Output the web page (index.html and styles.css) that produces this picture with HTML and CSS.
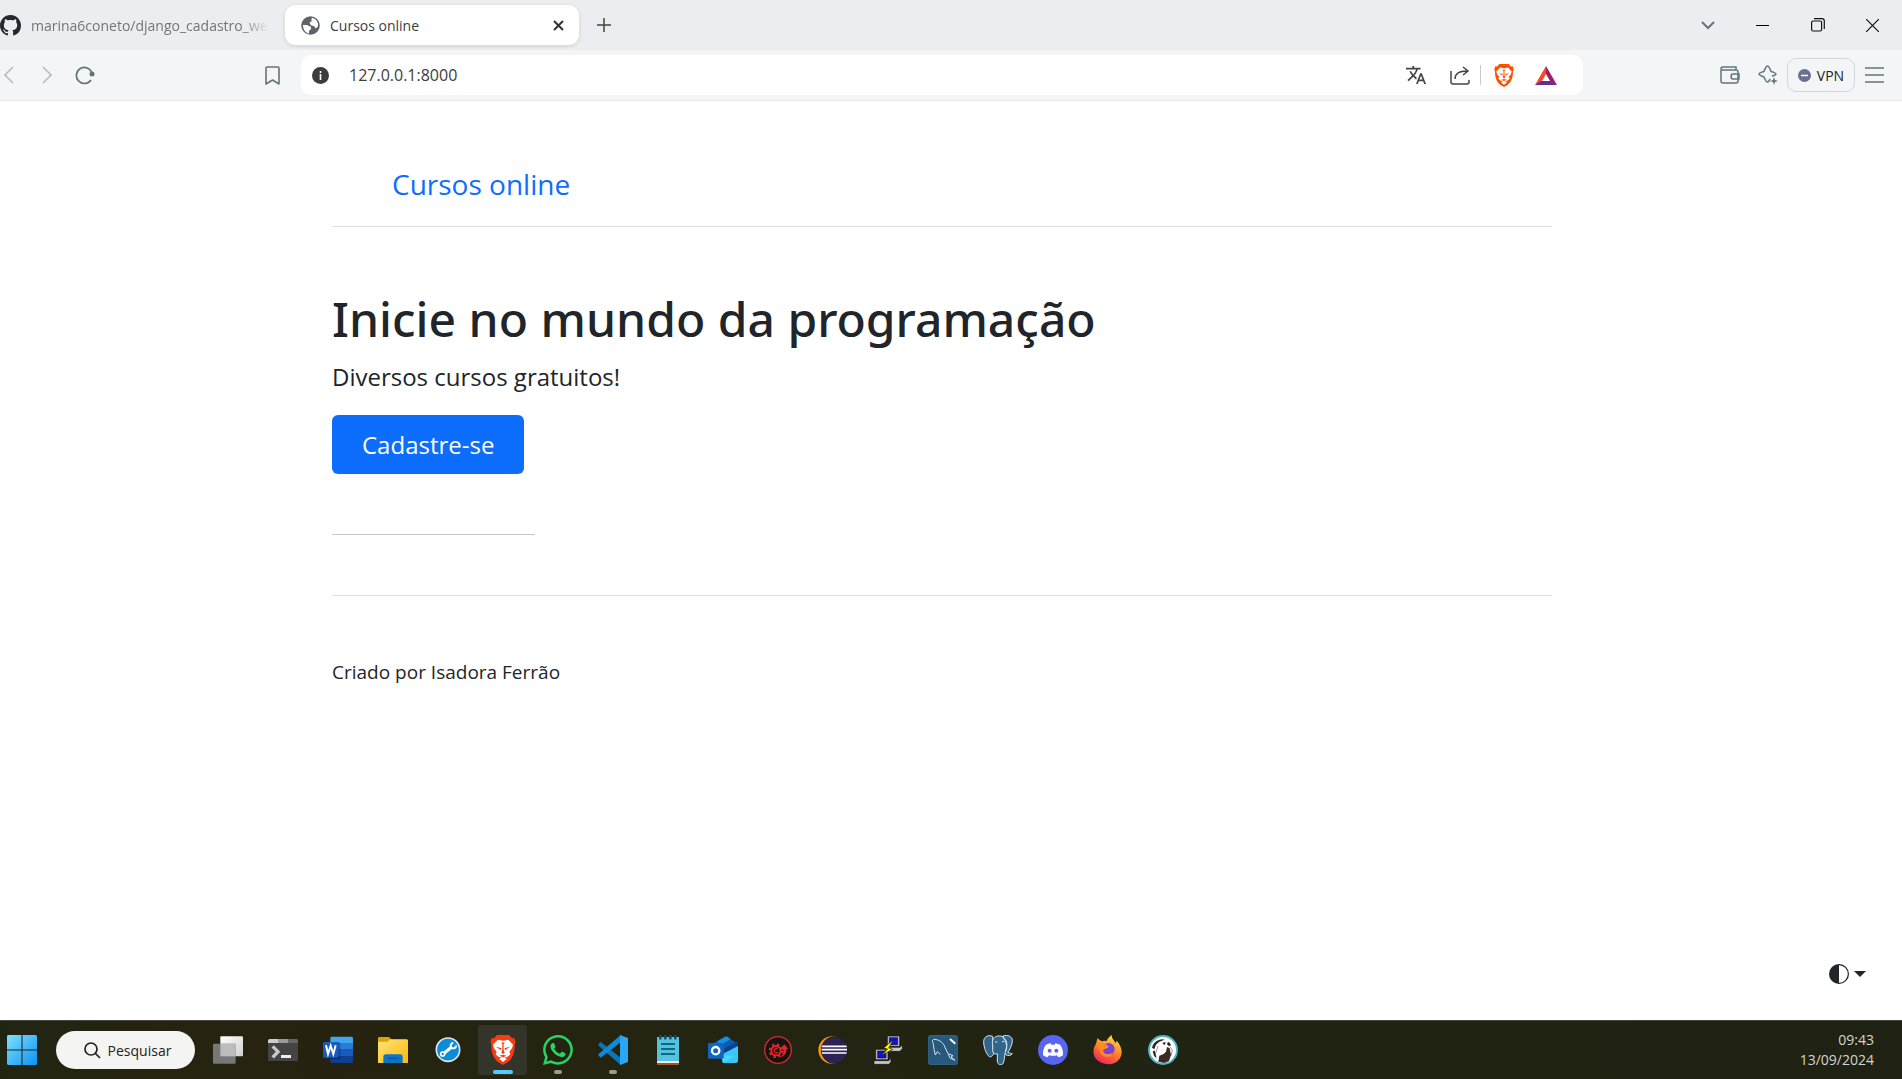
FILE: index.html
```html
<!DOCTYPE html>
<html lang="pt-BR">
<head>
<meta charset="utf-8">
<title>Cursos online</title>
<link rel="stylesheet" href="styles.css">
</head>
<body>
<svg class="defs" aria-hidden="true">
  <defs>
    <symbol id="brave" viewBox="0 0 76 90">
      <path d="M20 0h36l9 10 7-1 4 12-3 8c1 25-8 42-20 52L38 90 23 81C11 71 2 54 3 29L0 21 4 9l7 1z"/>
      <path fill="#fff" d="M22 14l16 3 16-3 14 15-3 11-8 10 3 8-8 7-6 2-3-1 6 6-11 9-11-9 6-6-3 1-6-2-8-7 3-8-8-10-3-11z"/>
      <path d="M16 35l16 4 2 3-4 3-4-4zM60 35l-16 4-2 3 4 3 4-4zM32 24l6-2 6 2-4 2v18l3 9-5 4-5-4 3-9V26zM27 62l11-3 11 3-11 5z"/>
    </symbol>
  </defs>
</svg>

<header class="browser">
  <div class="tabstrip">
    <a class="tab tab-idle" href="#">
      <svg width="21" height="21" viewBox="0 0 16 16" fill="#24292f"><path d="M8 0C3.58 0 0 3.58 0 8c0 3.54 2.29 6.53 5.47 7.59.4.07.55-.17.55-.38 0-.19-.01-.82-.01-1.49-2.01.37-2.53-.49-2.69-.94-.09-.23-.48-.94-.82-1.13-.28-.15-.68-.52-.01-.53.63-.01 1.08.58 1.23.82.72 1.21 1.87.87 2.33.66.07-.52.28-.87.51-1.07-1.78-.2-3.64-.89-3.64-3.95 0-.87.31-1.59.82-2.15-.08-.2-.36-1.02.08-2.12 0 0 .67-.21 2.2.82.64-.18 1.32-.27 2-.27.68 0 1.36.09 2 .27 1.53-1.04 2.2-.82 2.2-.82.44 1.1.16 1.92.08 2.12.51.56.82 1.27.82 2.15 0 3.07-1.87 3.75-3.65 3.95.29.25.54.73.54 1.48 0 1.07-.01 1.93-.01 2.2 0 .21.15.46.55.38A8.012 8.012 0 0 0 16 8c0-4.42-3.58-8-8-8z"/></svg>
      <span class="tab-title">marina6coneto/django_cadastro_we</span>
    </a>
    <div class="tab tab-active">
      <svg width="19" height="19" viewBox="0 0 19 19"><circle cx="9.500" cy="9.500" r="9.300" fill="#5f6368"/><path fill="#fff" d="M2 9h4l4 2v2l-2 2v2.500C4.500 17 2 13.500 2 9zM11 1.800c2.500.500 5 2.500 6 5.700v3l-2.500 2-1.500-2.500-3-.500-1.500-3 2-1V3z"/></svg>
      <span class="tab-title">Cursos online</span>
      <button class="icon-btn close-tab" aria-label="Fechar guia"><svg width="11" height="11" viewBox="0 0 11 11" stroke="#333" stroke-width="2"><path d="M1 1l9 9M10 1l-9 9"/></svg></button>
    </div>
    <button class="icon-btn new-tab" aria-label="Nova guia"><svg width="14" height="14" viewBox="0 0 14 14" stroke="#444" stroke-width="1.500"><path d="M7 0v14M0 7h14"/></svg></button>
    <div class="window-controls">
      <button class="icon-btn" aria-label="Pesquisar guias"><svg width="14" height="9" viewBox="0 0 14 9" fill="none" stroke="#62757e" stroke-width="2"><path d="M1 1l6 6 6-6"/></svg></button>
      <button class="icon-btn" aria-label="Minimizar"><svg width="13" height="13" viewBox="0 0 13 13" stroke="#000"><path d="M0 6.500h13"/></svg></button>
      <button class="icon-btn" aria-label="Restaurar"><svg width="14" height="14" viewBox="0 0 14 14" fill="none" stroke="#111" stroke-width="1.200"><rect x=".600" y="3" width="10" height="10" rx="1.500"/><path d="M3 .700h8q2.300 0 2.300 2.300v8"/></svg></button>
      <button class="icon-btn" aria-label="Fechar"><svg width="13" height="13" viewBox="0 0 13 13" stroke="#111" stroke-width="1.200"><path d="M0 0l13 13M13 0L0 13"/></svg></button>
    </div>
  </div>

  <div class="toolbar">
    <div class="nav-tools">
      <button class="icon-btn" aria-label="Voltar"><svg width="10" height="18" viewBox="0 0 10 18" fill="none" stroke="#b5c0c5" stroke-width="1.700"><path d="M9 1L1 9l8 8"/></svg></button>
      <button class="icon-btn" aria-label="Avançar"><svg width="10" height="18" viewBox="0 0 10 18" fill="none" stroke="#b5c0c5" stroke-width="1.700"><path d="M1 1l8 8-8 8"/></svg></button>
      <button class="icon-btn" aria-label="Recarregar"><svg width="20" height="19" viewBox="0 0 20 19"><path d="M17 7A8 8 0 1 0 16 14" fill="none" stroke="#62757e" stroke-width="1.700"/><circle cx="17" cy="8" r="2.500" fill="#62757e"/></svg></button>
      <button class="icon-btn bookmark" aria-label="Favoritos"><svg width="15" height="19" viewBox="0 0 15 19" fill="none" stroke="#62757e" stroke-width="1.600" stroke-linejoin="round"><path d="M1 2q0-1 1-1h11q1 0 1 1v16l-6.500-4L1 18z"/></svg></button>
    </div>
    <div class="address">
      <button class="icon-btn" aria-label="Informações do site"><svg width="17" height="17" viewBox="0 0 17 17"><circle cx="8.500" cy="8.500" r="8.500" fill="#3c3c3e"/><path stroke="#fff" stroke-width="1.600" d="M8.500 7v6M8.500 4v2"/></svg></button>
      <input type="text" value="127.0.0.1:8000" aria-label="Endereço">
      <div class="address-tools">
        <button class="icon-btn" aria-label="Traduzir"><svg width="20" height="20" viewBox="1 2 22 20" fill="#444"><path d="M12.870 15.070l-2.540-2.510.03-.03c1.740-1.940 2.980-4.170 3.710-6.530H17V4h-7V2H8v2H1v1.990h11.170C11.500 7.920 10.440 9.750 9 11.350 8.070 10.320 7.300 9.190 6.690 8h-2c.73 1.630 1.730 3.170 2.980 4.560l-5.090 5.020L4 19l5-5 3.110 3.110.76-2.040zM18.500 10h-2L12 22h2l1.120-3h4.750L21 22h2l-4.500-12zm-2.620 7l1.620-4.330L19.120 17h-3.240z"/></svg></button>
        <button class="icon-btn share" aria-label="Compartilhar"><svg width="20" height="19" viewBox="0 0 20 19" fill="none" stroke="#444" stroke-width="1.500"><path d="M1 5v11q0 2 2 2h14q2 0 2-2v-2M5 13c0-5 4-8 12-8M13 1l5 4-5 4"/></svg></button>
        <button class="icon-btn" aria-label="Brave Shields"><svg width="20" height="23" fill="#ff5000"><use href="#brave"/></svg></button>
        <button class="icon-btn" aria-label="Brave Rewards"><svg width="22" height="19" viewBox="0 0 22 19"><path fill="#ff4724" d="M11 0L0 19l7-4 4-7z"/><path fill="#9e1f63" d="M11 0l11 19-7-4-4-7z"/><path fill="#662d91" d="M0 19h22l-6-4H6z"/></svg></button>
      </div>
    </div>
    <div class="extra-tools">
      <button class="icon-btn" aria-label="Carteira"><svg width="20" height="18" viewBox="0 0 20 18" fill="none" stroke="#62757e" stroke-width="1.500"><path d="M1 4v11q0 2 2 2h13q2 0 2-2V6q0-2-2-2H3Q1 4 1 2.500T3 1h13v3"/><path d="M19 8h-6q-2 0-2 2.500t2 2.500h6z"/></svg></button>
      <button class="icon-btn" aria-label="Leo AI"><svg width="20" height="20" viewBox="0 0 20 20" fill="none" stroke="#62757e" stroke-width="1.500" stroke-linejoin="round"><path d="M14 11q4-1 4-2t-5-2.500Q11 1 9.500 1T6 6.500Q1 8 1 9t5 3q2 5 3.500 5T12 14"/><path d="M16 12l1 3 3 1-3 1-1 3-1-3-3-1 3-1z" fill="#62757e" stroke="none"/></svg></button>
      <button class="vpn"><svg width="13" height="13" viewBox="0 0 13 13"><circle cx="6.500" cy="6.500" r="6.500" fill="#6b7090"/><path stroke="#fff" stroke-width="1.500" d="M3 6.500h7"/></svg>VPN</button>
      <button class="icon-btn" aria-label="Menu"><svg width="19" height="16" viewBox="0 0 19 16" stroke="#62757e" stroke-width="1.500"><path d="M0 1h19M0 8h19M0 15h19"/></svg></button>
    </div>
  </div>
</header>

<main class="page">
  <div class="container">
    <div class="site-header"><a href="#">Cursos online</a></div>
    <section class="hero">
      <h1>Inicie no mundo da programação</h1>
      <p>Diversos cursos gratuitos!</p>
      <a class="btn" href="#">Cadastre-se</a>
    </section>
    <hr class="short-rule">
    <footer class="site-footer">Criado por Isadora Ferrão</footer>
  </div>
  <button class="theme-toggle" aria-label="Alternar tema">
    <svg width="20" height="20" viewBox="0 0 16 16" fill="#212529"><path d="M8 15A7 7 0 1 0 8 1v14zm0 1A8 8 0 1 1 8 0a8 8 0 0 1 0 16z"/></svg>
    <svg width="12" height="6" viewBox="0 0 12 6" fill="#212529"><path d="M0 0h12L6 6z"/></svg>
  </button>
</main>

<nav class="taskbar" aria-label="Barra de tarefas">
  <button class="app start" aria-label="Iniciar"><svg width="29" height="29" viewBox="0 0 87 87"><defs><linearGradient id="win" x2="1" y2="1"><stop stop-color="#7fe0ff"/><stop offset="1" stop-color="#0a93f5"/></linearGradient></defs><path fill="url(#win)" d="M3 0h39v42H0V3zM45 0h39l3 3v39H45zM0 45h42v42H3l-3-3zM45 45h42v39l-3 3H45z"/></svg></button>
  <button class="search"><svg width="17" height="17" viewBox="0 0 17 17" fill="none" stroke="#222" stroke-width="1.700"><circle cx="7" cy="7" r="6"/><path d="M11 11l5 5"/></svg>Pesquisar</button>
  <div class="apps">
    <button class="app" aria-label="Visão de tarefas"><svg viewBox="0 0 90 90"><defs><linearGradient id="tv" x2="1" y2="1"><stop stop-color="#fff"/><stop offset="1" stop-color="#d0d0d0"/></linearGradient></defs><rect x="22" y="4" width="68" height="60" rx="3" fill="url(#tv)"/><rect y="26" width="68" height="60" rx="3" fill="#777"/><path fill="#bcbcbc" d="M22 26h46v38H22z"/></svg></button>
    <button class="app" aria-label="Terminal"><svg viewBox="0 0 90 90"><rect y="12" width="90" height="66" rx="4" fill="#444"/><path fill="#ccc" d="M4 12h26v12H0v-8z"/><path fill="#999" d="M30 12h30v12H30z"/><path fill="#666" d="M60 12h26l4 4v8H60z"/><path d="M14 34l16 16-16 17" fill="none" stroke="#c8c8c8" stroke-width="10"/><path fill="#eee" d="M39 60h30v9H39z"/></svg></button>
    <button class="app" aria-label="Word"><svg viewBox="0 0 90 90"><path fill="#41a5ee" d="M25 5h62l3 3v18H22V8z"/><path fill="#2b7cd3" d="M22 24h68v20H22z"/><path fill="#185abd" d="M22 44h68v20H22z"/><path fill="#103f91" d="M22 63h68v18l-3 3H25l-3-3z"/><path d="M22 22h30v50H22z" opacity=".25"/><rect y="21" width="47" height="47" rx="4" fill="#185abd"/><path fill="none" stroke="#fff" stroke-width="6" d="M9 31l6 26 8-25 8 25 7-26"/></svg></button>
    <button class="app" aria-label="Explorador de Arquivos"><svg viewBox="0 0 90 90"><defs><linearGradient id="fd" x2="1" y2="1"><stop stop-color="#ffe27a"/><stop offset="1" stop-color="#fcb90a"/></linearGradient></defs><path fill="#e09f08" d="M3 6h30l8 8h46l3 4v20H0V9z"/><path fill="url(#fd)" d="M0 20h28l9-7h50l3 3v68H0z"/><path fill="#0b74c8" d="M16 84V66q0-8 8-8h42q8 0 8 8v18z"/><path stroke="#075293" stroke-width="3" d="M29 70h32"/></svg></button>
    <button class="app" aria-label="Ferramentas"><svg viewBox="0 0 90 90"><circle cx="45" cy="44" r="35" fill="#0c8bd9" stroke="#dce8f0" stroke-width="5"/><path stroke="#fff" stroke-width="9" d="M34 54l22-18"/><path fill="none" stroke="#fff" stroke-width="6" d="M69 31a8 8 0 1 1-8-7"/><circle cx="29" cy="57" r="6" fill="none" stroke="#fff" stroke-width="5"/></svg></button>
    <button class="app running current" aria-label="Brave"><svg viewBox="0 0 90 90" fill="#fa3b12"><use href="#brave" x="7" width="76" height="90"/></svg></button>
    <button class="app running" aria-label="WhatsApp"><svg viewBox="0 0 16 16" fill="#25d366"><path d="M13.601 2.326A7.854 7.854 0 0 0 7.994 0C3.627 0 .068 3.558.064 7.926c0 1.399.366 2.760 1.057 3.965L0 16l4.204-1.102a7.933 7.933 0 0 0 3.790.965h.004c4.368 0 7.926-3.558 7.930-7.930A7.898 7.898 0 0 0 13.600 2.326zM7.994 14.521a6.573 6.573 0 0 1-3.356-.92l-.24-.144-2.494.654.666-2.433-.156-.251a6.560 6.560 0 0 1-1.007-3.505c0-3.626 2.957-6.584 6.591-6.584a6.560 6.560 0 0 1 4.660 1.931 6.557 6.557 0 0 1 1.928 4.660c-.004 3.639-2.961 6.592-6.592 6.592zm3.615-4.934c-.197-.099-1.170-.578-1.353-.646-.182-.065-.315-.099-.445.099-.133.197-.513.646-.627.775-.114.133-.232.148-.43.05-.197-.1-.836-.308-1.592-.985-.59-.525-.985-1.175-1.103-1.372-.114-.198-.011-.304.088-.403.087-.088.197-.232.296-.346.1-.114.133-.198.198-.33.065-.134.034-.248-.015-.347-.05-.099-.445-1.076-.612-1.470-.16-.389-.323-.335-.445-.34-.114-.007-.247-.007-.38-.007a.729.729 0 0 0-.529.247c-.182.198-.691.677-.691 1.654 0 .977.71 1.916.81 2.049.098.133 1.394 2.132 3.383 2.992.47.205.84.326 1.129.418.475.152.904.129 1.246.08.38-.058 1.171-.48 1.338-.943.164-.464.164-.86.114-.943-.049-.084-.182-.133-.38-.232z"/></svg></button>
    <button class="app running" aria-label="Visual Studio Code"><svg viewBox="0 0 90 90"><path fill="#0877b9" d="M1 28l7-7 60 47v22L2 32z"/><path fill="#0f8ad8" d="M1 61l7 7 60-46V0L2 57z"/><path fill="#2ba6f5" d="M66 0l24 9v72l-24 9z"/></svg></button>
    <button class="app" aria-label="Bloco de Notas"><svg viewBox="0 0 90 90"><path fill="#a5541a" d="M12 80h66v10H12z"/><path fill="#e8eef0" d="M12 74h66v10H12z"/><path fill="#57c2dc" d="M12 6h66v72H12z"/><path stroke="#0a6987" stroke-width="6" d="M24 27h42M24 42h42M24 57h42"/><path stroke="#0d526b" stroke-width="8" stroke-linecap="round" d="M22 3v7M37 3v7M52 3v7M67 3v7"/></svg></button>
    <button class="app" aria-label="Outlook"><svg viewBox="0 0 90 90"><path fill="#0b5cad" d="M12 27L49 5q4-1 8 1l30 19-34 30H12z"/><path fill="#1490df" d="M30 18l26-14 12 8-40 24z"/><path fill="#0a3f91" d="M44 44l45-25v19L50 60z"/><path fill="#38c6f4" d="M38 60l52-27v44q0 7-7 7H44z"/><path fill="#50e6ff" opacity=".6" d="M48 84l30-22-40-2z"/><rect y="24" width="47" height="47" rx="4" fill="#1066bf"/><circle cx="23" cy="47" r="11" fill="none" stroke="#fff" stroke-width="7"/></svg></button>
    <button class="app" aria-label="Gerenciador"><svg viewBox="0 0 90 90"><circle cx="45" cy="45" r="40" fill="#151313" stroke="#d52a2f" stroke-width="4"/><circle cx="39" cy="47" r="14" fill="none" stroke="#e5252a" stroke-width="6"/><circle cx="39" cy="47" r="19" fill="none" stroke="#e5252a" stroke-width="6" stroke-dasharray="7 8"/><path d="M44 43a6 6 0 1 0 0 8" fill="none" stroke="#e5252a" stroke-width="4"/><path fill="#e5252a" d="M49 68q16-8 11-26h-8l12-14 12 14h-6q3 20-21 26z"/></svg></button>
    <button class="app" aria-label="Eclipse"><svg viewBox="0 0 90 90"><circle cx="42" cy="45" r="41" fill="#f7941e"/><circle cx="50" cy="45" r="41" fill="#242412"/><circle cx="49" cy="45" r="38" fill="#2c2255"/><path stroke="#fff" stroke-width="5" d="M12 34h74M11 44h76M12 54h74"/></svg></button>
    <button class="app" aria-label="PuTTY"><svg viewBox="0 0 90 90" stroke="#111" stroke-width="2"><g fill="#c8c8c8"><path d="M43 3h37v31H43zM37 37h44l7-7v11l-7 8H37zM8 43h37v31H8zM3 77h44l7-7v11l-6 7H3z"/></g><path fill="#1111db" d="M49 8h25v21H49zM14 48h25v21H14z"/><path fill="#ff0" d="M61 14L32 39l12 3-20 20 35-19-12-4z"/></svg></button>
    <button class="app" aria-label="MySQL Workbench"><svg viewBox="0 0 90 90"><rect x="1" y="1" width="88" height="88" rx="8" fill="#28597c" stroke="#3c7495" stroke-width="2"/><path fill="none" stroke="#d7e5ee" stroke-width="3" d="M37 58l-9-8-6 10c-3-13-5-20-6-34-5-8-2-14 5-13 14 2 26 11 30 24l9 19 15 6-6 3 12 11-15-7-5-11"/><path stroke="#fff" stroke-width="6" d="M66 12l16 14"/></svg></button>
    <button class="app" aria-label="PostgreSQL"><svg viewBox="0 0 90 90" fill="#32658d" stroke="#d9e5ed" stroke-width="3" stroke-linejoin="round"><path d="M29 4C17-1 2 4 2 20c0 17 8 38 17 45 5 3 9-3 13-8l-2-16z"/><path d="M60 3c13-4 28 0 28 14 0 12-8 28-14 35 6 3 11 3 14 4-3 6-14 7-20 3l-8-16z"/><path d="M29 15C34 3 47 1 57 4c12 6 16 20 14 30l-4 18c-3 9-2 28-8 35-6 5-15 0-16-6V56c-8 3-15-2-14-12 2-12-3-20 0-29z"/><path fill="none" d="M59 5c6 10 14 22 12 35l-4 11M36 21h7M57 20h6"/></svg></button>
    <button class="app" aria-label="Discord"><svg viewBox="0 0 90 90"><circle cx="45" cy="45" r="45" fill="#5865f2"/><path fill="#fff" d="M38 25c-7 1-12 3-15 5-6 9-9 20-8 31 5 3 9 5 14 6l4-6q12 3 24 0l4 6c5-1 10-3 14-6 1-12-2-22-8-31-4-2-9-4-15-5l-2 4H40z"/><circle cx="35" cy="47" r="6" fill="#5865f2"/><circle cx="55" cy="47" r="6" fill="#5865f2"/></svg></button>
    <button class="app" aria-label="Firefox"><svg viewBox="0 0 90 90"><defs><linearGradient id="ff" x1=".8" x2=".3" y2="1"><stop stop-color="#ffe44b"/><stop offset=".5" stop-color="#ff8325"/><stop offset="1" stop-color="#f32062"/></linearGradient></defs><path fill="url(#ff)" d="M13 10l13 9q7-3 15-1c3-8 10-14 15-18 0 11 8 16 12 25l3-8c11 12 18 29 14 43-5 18-21 28-39 28S8 77 3 61C-1 45 4 33 9 27z"/><circle cx="47" cy="42" r="18" fill="#7b43d4"/><path fill="#ff8b21" d="M9 27c15-6 20-2 35 4l3 6-17 8c0 14 16 16 28 9-4 14-24 16-33 3C19 48 19 42 9 27z"/></svg></button>
    <button class="app" aria-label="DBeaver"><svg viewBox="0 0 90 90"><circle cx="45" cy="45" r="42" fill="#fff" stroke="#4eb5c2" stroke-width="6"/><path fill="#302724" d="M12 38q3-14 14-20 12-7 24-4l-16 6-10 9-5 14zM44 23l9-2-2 8-6-1zM60 20q8 3 9 11l-6 3-6-6zM14 50l6-4 6 24q-10-7-12-20z"/><path fill="#3b2925" d="M34 62q14-3 20-12l3-14 8 4 4 20-6 18-14 6-18-4z"/><path fill="none" stroke="#6a605c" stroke-width="2" d="M30 33l-8 25M66 36l7 10-4 18"/></svg></button>
  </div>
  <div class="clock"><time>09:43</time><time>13/09/2024</time></div>
</nav>
</body>
</html>
```
FILE: styles.css
```css
* { box-sizing: border-box; }

body {
  margin: 0;
  min-height: 100vh;
  display: flex;
  flex-direction: column;
  background: #fff;
  color: #212529;
  font-family: "Open Sans", "Noto Sans", sans-serif;
  font-size: 14px;
}

button, input { font: inherit; color: inherit; border: 0; margin: 0; padding: 0; background: none; }
a { color: inherit; text-decoration: none; }
svg { display: block; flex: none; }
.defs { position: absolute; width: 0; height: 0; }

.icon-btn {
  display: flex;
  align-items: center;
  justify-content: center;
  width: 38px;
  height: 38px;
}

/* Browser window */
.browser { border-bottom: 1px solid #e6e8eb; }
.tabstrip { display: flex; align-items: center; height: 50px; background: #ecedf1; }
.tab { display: flex; align-items: center; height: 40px; }
.tab-title { flex: 1; white-space: nowrap; }
.tab-idle { width: 269px; margin-right: 16px; gap: 10px; color: #747579; }
.tab-idle .tab-title {
  -webkit-mask-image: linear-gradient(to right, #000 88%, transparent);
  mask-image: linear-gradient(to right, #000 88%, transparent);
}
.tab-active {
  width: 294px;
  padding: 0 2px 0 16px;
  gap: 10px;
  border-radius: 10px;
  background: #fff;
  box-shadow: 0 1px 4px #0002;
  color: #3b3d40;
}
.new-tab { margin-left: 6px; }
.window-controls { display: flex; margin: 0 2px 0 auto; }
.window-controls .icon-btn { width: 55px; }

.toolbar { display: flex; align-items: center; height: 50px; background: #f3f5f7; }
.nav-tools { display: flex; width: 311px; margin-left: -10px; padding-right: 10px; }
.bookmark { margin-left: auto; }
.address {
  display: flex;
  align-items: center;
  flex: 1;
  height: 40px;
  border-radius: 10px;
  background: #fff;
}
.address input { flex: 1; min-width: 0; padding-left: 10px; font-size: 16px; color: #3b3d40; outline: 0; }
.address-tools { display: flex; padding-right: 18px; gap: 4px; }
.share { width: 42px; height: 20px; align-self: center; border-right: 1px solid #c8cacd; }
.extra-tools { display: flex; align-items: center; width: 319px; justify-content: flex-end; padding-right: 9px; }
.vpn {
  display: flex;
  align-items: center;
  justify-content: center;
  gap: 6px;
  width: 68px;
  height: 34px;
  border: 1px solid #cfd8df;
  border-radius: 9px;
  color: #222;
}

/* Site */
.page { flex: 1; display: flex; flex-direction: column; padding-right: 18px; }
.container { width: 100%; max-width: 1220px; margin: 0 auto; padding-top: 60px; }
.site-header {
  padding: 0 60px 19px;
  border-bottom: 1px solid #dee2e6;
  font-size: 28px;
  line-height: 46px;
  color: #0d6efd;
}
.hero { padding: 60px 0; }
h1 {
  margin: 0 0 8px;
  font-family: "Noto Sans", "Open Sans", sans-serif;
  font-size: 48px;
  font-weight: 500;
  line-height: 63px;
}
.hero p { margin: 0 0 19px; font-size: 24px; line-height: 38px; }
.btn {
  display: block;
  width: fit-content;
  padding: 11px 30px 10px;
  border-radius: 6px;
  background: #0d6efd;
  color: #fff;
  font-size: 24px;
  line-height: 38px;
}
.short-rule { width: 203px; margin: 0; border: 0; border-top: 1px solid #c7c8c9; }
.site-footer { margin-top: 60px; padding-top: 61px; border-top: 1px solid #dee2e6; font-size: 19px; line-height: 30px; }
.theme-toggle { display: flex; align-items: center; gap: 5px; margin: auto 18px 36px auto; }

/* Taskbar */
.taskbar {
  display: flex;
  align-items: center;
  height: 59px;
  border-top: 1px solid #44473a;
  background: linear-gradient(90deg, #202512, #26230f 8%, #222412 50%, #1f2212);
}
.app { position: relative; display: flex; align-items: center; justify-content: center; width: 55px; height: 50px; }
.app svg { width: 30px; height: 30px; }
.start { width: 44px; margin-right: 12px; }
.search {
  display: flex;
  align-items: center;
  justify-content: center;
  gap: 7px;
  width: 139px;
  height: 38px;
  padding-left: 4px;
  border-radius: 19px;
  background: #f4f4f2;
  color: #222;
}
.apps { display: flex; margin-left: 5px; }
.current { background: #34352a; border-radius: 5px; background-clip: content-box; padding: 0 3px; }
.running::after {
  content: "";
  position: absolute;
  bottom: 1px;
  width: 8px;
  height: 4px;
  border-radius: 2px;
  background: #999b90;
}
.current::after { width: 20px; background: #5ac8fa; }
.clock {
  display: flex;
  flex-direction: column;
  align-items: flex-end;
  margin-left: auto;
  padding-right: 28px;
  line-height: 20px;
  color: #d4d5cf;
}
```
